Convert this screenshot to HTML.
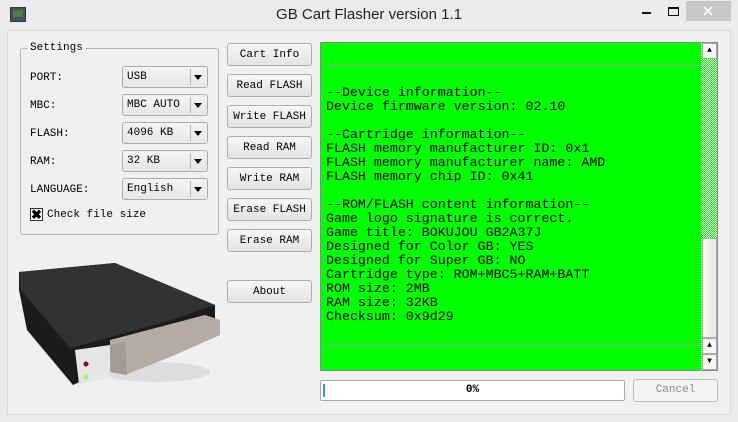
<!DOCTYPE html>
<html><head><meta charset="utf-8"><style>
*{box-sizing:border-box;margin:0;padding:0}
body{width:738px;height:422px;background:#ebebeb;position:relative;overflow:hidden;font-family:"Liberation Mono","DejaVu Sans Mono",monospace;font-size:11px;color:#000}
.abs{position:absolute}
.client{left:7px;top:30px;width:724px;height:385px;background:#f0f0f0;border:1px solid #d9d9d9}
.title{left:0;top:6px;width:738px;text-align:center;font-family:"Liberation Sans",sans-serif;font-size:15px;color:#222}
.btn{position:absolute;left:227px;width:85px;height:23px;border:1px solid #adadad;border-radius:3px;background:linear-gradient(#f6f6f6,#e3e3e3);text-align:center;line-height:22px;font-size:11px}
.lbl{position:absolute;left:30px;font-size:11px;line-height:14px;margin-top:1px}
.combo{position:absolute;left:122px;width:86px;height:22px;border:1px solid #acacac;border-radius:3px;background:linear-gradient(#f4f4f4,#e6e6e6);font-size:11px;line-height:21px;padding-left:4px}
.combo:after{content:"";position:absolute;left:67px;top:2px;width:1px;height:16px;background:#b8b8b8}
.combo i{position:absolute;right:5px;top:8px;border-left:4px solid transparent;border-right:4px solid transparent;border-top:5px solid #000}
.green{left:320px;top:42px;width:398px;height:329px;background:#00ff00;border:1px solid #8a8a8a;border-right:none}
.txt{left:326px;top:86px;font-size:13.3px;line-height:14px;white-space:pre;font-family:"Liberation Mono",monospace}
</style></head><body>
<div class="abs" style="left:10px;top:7px;width:16px;height:15px;background:#3d5466;border:1px solid #2a3a48"><div style="margin:2px;width:10px;height:7px;background:#5a7a3a"></div></div>
<div class="abs title">GB Cart Flasher version 1.1</div>
<div class="abs" style="left:642px;top:12px;width:9px;height:2px;background:#111"></div>
<div class="abs" style="left:668px;top:7px;width:11px;height:9px;border:1px solid #111;border-top-width:2px"></div>
<div class="abs" style="left:686px;top:1px;width:45px;height:20px;background:#c7c7c7"></div>
<svg class="abs" style="left:703px;top:6px" width="10" height="10"><path d="M1 1L9 9M9 1L1 9" stroke="#fff" stroke-width="1.6"/></svg>
<div class="abs client"></div>
<div class="abs" style="left:20px;top:48px;width:199px;height:187px;border:1px solid #b5b5b5;border-radius:3px"></div>
<div class="abs" style="left:27px;top:42px;background:#f0f0f0;padding:0 3px;font-size:11px">Settings</div>
<div class="lbl" style="top:70px">PORT:</div><div class="combo" style="top:66px">USB<i></i></div>
<div class="lbl" style="top:98px">MBC:</div><div class="combo" style="top:94px">MBC AUTO<i></i></div>
<div class="lbl" style="top:126px">FLASH:</div><div class="combo" style="top:122px">4096 KB<i></i></div>
<div class="lbl" style="top:154px">RAM:</div><div class="combo" style="top:150px">32 KB<i></i></div>
<div class="lbl" style="top:182px">LANGUAGE:</div><div class="combo" style="top:178px">English<i></i></div>
<div class="abs" style="left:30px;top:208px;width:13px;height:13px;border:1px solid #333;background:#fff;font:bold 13px/11px 'Liberation Sans',sans-serif;text-align:center">✖</div>
<div class="lbl" style="left:47px;top:207px">Check file size</div>
<div class="btn" style="top:43px">Cart Info</div>
<div class="btn" style="top:74px">Read FLASH</div>
<div class="btn" style="top:105px">Write FLASH</div>
<div class="btn" style="top:136px">Read RAM</div>
<div class="btn" style="top:167px">Write RAM</div>
<div class="btn" style="top:198px">Erase FLASH</div>
<div class="btn" style="top:229px">Erase RAM</div>
<div class="btn" style="top:280px">About</div>
<svg class="abs" style="left:15px;top:260px" width="210" height="135">
<ellipse cx="140" cy="112" rx="55" ry="10" fill="#ddd"/>
<polygon points="4,12 100,3 200,45 200,65 125,95 58,125 12,70 4,30" fill="#1a1c1b"/>
<polygon points="4,12 100,3 200,45 150,62 55,88 6,30" fill="#313332"/>
<polygon points="60,90 95,85 95,118 64,124" fill="#e6e6e6"/>
<circle cx="71" cy="104" r="2.5" fill="#8a1010"/>
<circle cx="71" cy="117" r="2.5" fill="#9aff60"/>
<polygon points="95,80 190,55 205,60 205,75 160,95 110,115 95,112" fill="#b5aba2"/>
<polygon points="95,85 110,82 112,115 96,112" fill="#a39a91"/>
</svg>
<div class="abs green"></div>
<div class="abs" style="left:326px;top:65px;width:374px;height:1px;background:#a0a0a0"></div>
<div class="abs" style="left:326px;top:345px;width:374px;height:1px;background:#a0a0a0"></div>
<div class="abs" style="left:701px;top:42px;width:17px;height:329px;border:1px solid #8a8a8a;border-left:none;background:repeating-conic-gradient(#00ff00 0 25%,#fff 0 50%) 0 0/2px 2px"></div>
<div class="abs" style="left:702px;top:43px;width:15px;height:16px;background:#f4f4f4;border:1px solid #aaa;font-size:8px;text-align:center;line-height:14px">▲</div>
<div class="abs" style="left:702px;top:238px;width:15px;height:100px;background:linear-gradient(90deg,#f8f8f8,#e8e8e8);border:1px solid #aaa"></div>
<div class="abs" style="left:702px;top:338px;width:15px;height:16px;background:#f4f4f4;border:1px solid #aaa;font-size:8px;text-align:center;line-height:14px">▲</div>
<div class="abs" style="left:702px;top:354px;width:15px;height:16px;background:#f4f4f4;border:1px solid #aaa;font-size:8px;text-align:center;line-height:14px">▼</div>
<div class="abs txt">--Device information--
Device firmware version: 02.10

--Cartridge information--
FLASH memory manufacturer ID: 0x1
FLASH memory manufacturer name: AMD
FLASH memory chip ID: 0x41

--ROM/FLASH content information--
Game logo signature is correct.
Game title: BOKUJOU GB2A37J
Designed for Color GB: YES
Designed for Super GB: NO
Cartridge type: ROM+MBC5+RAM+BATT
ROM size: 2MB
RAM size: 32KB
Checksum: 0x9d29</div>
<div class="abs" style="left:320px;top:380px;width:305px;height:21px;background:#fff;border:1px solid #a8a8a8;border-radius:2px"><div style="position:absolute;left:2px;top:3px;width:2px;height:13px;background:#3c8ef0"></div><div style="text-align:center;font-weight:bold;line-height:19px;font-size:11px">0%</div></div>
<div class="abs" style="left:633px;top:379px;width:85px;height:23px;border:1px solid #bcbcbc;border-radius:3px;background:#f4f4f4;color:#8a8a8a;text-align:center;line-height:21px;font-size:11px">Cancel</div>
</body></html>
